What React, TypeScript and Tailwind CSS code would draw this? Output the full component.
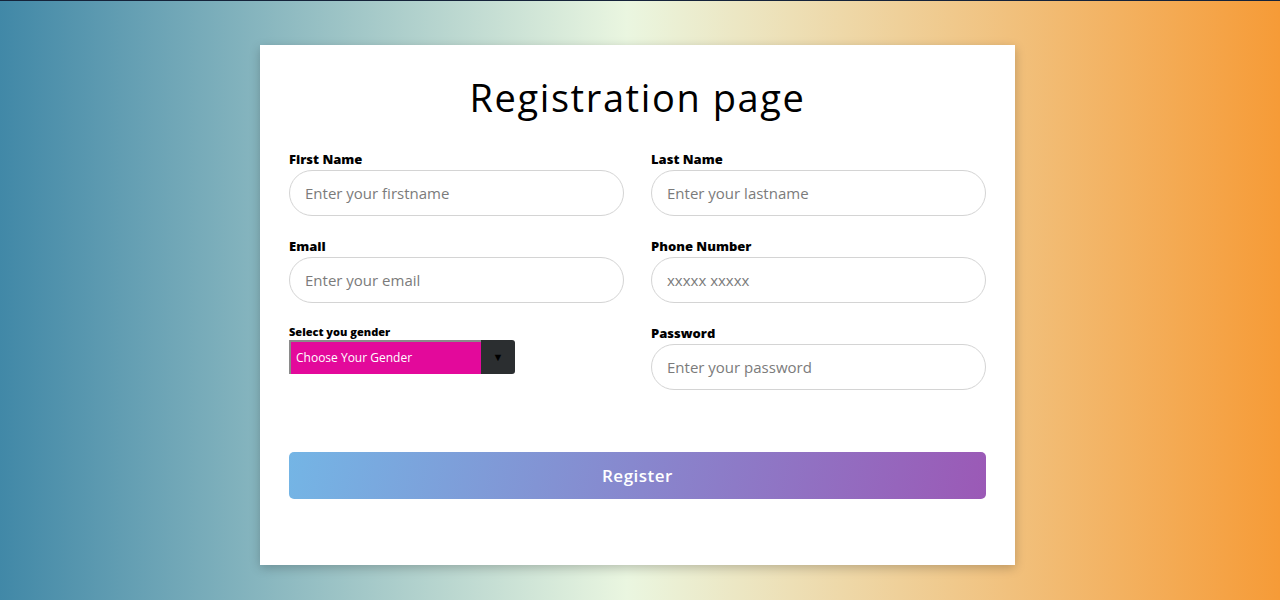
import { useState } from "react";

const font = "font-['Open_Sans',sans-serif]";

function Field({ label, placeholder, type = "text" }: { label: string; placeholder: string; type?: string }) {
  return (
    <label className="block">
      <span className="block h-[20px] text-[13px] leading-[20px] font-extrabold text-black">{label}</span>
      <input
        type={type}
        placeholder={placeholder}
        className="mt-px block h-[46px] w-full rounded-full border border-[#d4d4d4] bg-white px-[15px] text-[15px] text-black outline-none placeholder:text-[#7b7b7b]"
      />
    </label>
  );
}

export default function App() {
  const [gender, setGender] = useState("");

  return (
    <div
      className={`min-h-[600px] border-t border-[#15233a] bg-[linear-gradient(to_right,#4188a7_0%,#eaf6e0_49%,#f69b37_100%)] pt-[44px] ${font}`}
    >
      <form
        onSubmit={(e) => e.preventDefault()}
        className="ml-[260px] w-[755px] bg-white px-[29px] pb-[66px] pt-[24px] shadow-[0_3px_10px_rgba(0,0,0,0.22)]"
      >
        <h1 className="text-center text-[38px] leading-[56px] font-medium tracking-[1.6px] text-black">Registration page</h1>

        <div className="mt-[24px] grid grid-cols-2 gap-x-[27px] gap-y-[20px]">
          <Field label="First Name" placeholder="Enter your firstname" />
          <Field label="Last Name" placeholder="Enter your lastname" />
          <Field label="Email" placeholder="Enter your email" type="email" />
          <Field label="Phone Number" placeholder="xxxxx xxxxx" type="tel" />

          <div>
            <span className="block h-[16px] pt-[1px] text-[11px] leading-[16px] font-extrabold text-black">Select you gender</span>
            <div className="mt-px flex h-[34px] w-[226px]">
              <select
                value={gender}
                onChange={(e) => setGender(e.target.value)}
                className="h-full flex-1 appearance-none border-l-2 border-t-2 border-[#8a8a8a] bg-[#e3099b] pl-[5px] text-[12px] text-white outline-none"
              >
                <option value="">Choose Your Gender</option>
                <option value="male">Male</option>
                <option value="female">Female</option>
                <option value="other">Other</option>
              </select>
              <span className="grid w-[34px] place-items-center rounded-r-[3px] bg-[#2b2e30] text-[11px] text-black">
                ▼
              </span>
            </div>
          </div>
          <Field label="Password" placeholder="Enter your password" type="password" />
        </div>

        <button
          type="submit"
          className="mt-[62px] block h-[47px] w-full rounded-[5px] bg-[linear-gradient(100deg,#74b5e5,#9b59b6)] text-[17px] font-semibold tracking-[0.5px] text-white"
        >
          Register
        </button>
      </form>
    </div>
  );
}
